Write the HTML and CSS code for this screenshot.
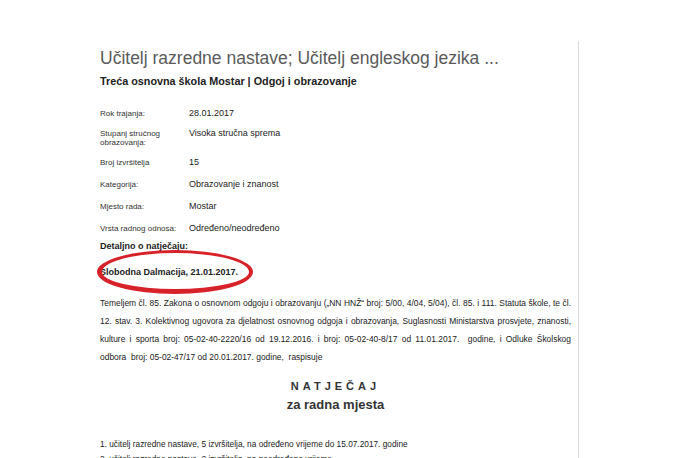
FILE: index.html
```html
<!DOCTYPE html>
<html>
<head>
<meta charset="utf-8">
<link rel="stylesheet" href="styles.css">
</head>
<body>
<div class="page">
  <div class="doc">
    <h1 class="title">Učitelj razredne nastave; Učitelj engleskog jezika ...</h1>
    <div class="sub">Treća osnovna škola Mostar | Odgoj i obrazovanje</div>
    <div class="info">
      <div class="row"><div class="lbl">Rok trajanja:</div><div class="val">28.01.2017</div></div>
      <div class="row"><div class="lbl">Stupanj stručnog obrazovanja:</div><div class="val">Visoka stručna sprema</div></div>
      <div class="row"><div class="lbl">Broj izvršitelja</div><div class="val">15</div></div>
      <div class="row"><div class="lbl">Kategorija:</div><div class="val">Obrazovanje i znanost</div></div>
      <div class="row"><div class="lbl">Mjesto rada:</div><div class="val">Mostar</div></div>
      <div class="row"><div class="lbl">Vrsta radnog odnosa:</div><div class="val">Određeno/neodređeno</div></div>
    </div>
    <div class="detail">Detaljno o natječaju:</div>
    <div class="source"><span>Slobodna Dalmacija, 21.01.2017.</span><div class="ring"></div></div>
    <p class="para">Temeljem čl. 85. Zakona o osnovnom odgoju i obrazovanju („NN HNŽ“ broj: 5/00, 4/04, 5/04), čl. 85. i 111. Statuta škole, te čl. 12. stav. 3. Kolektivnog ugovora za djelatnost osnovnog odgoja i obrazovanja, Suglasnosti Ministarstva prosvjete, znanosti, kulture i sporta broj: 05-02-40-2220/16 od 19.12.2016. i broj: 05-02-40-8/17 od 11.01.2017.&nbsp; godine, i Odluke Školskog odbora&nbsp; broj: 05-02-47/17 od 20.01.2017. godine,&nbsp; raspisuje</p>
    <div class="head">
      <div class="h-main">NATJEČAJ</div>
      <div class="h-sub">za radna mjesta</div>
    </div>
    <ol class="list">
      <li>učitelj razredne nastave, 5 izvršitelja, na određeno vrijeme do 15.07.2017. godine</li>
      <li>učitelj razredne nastave, 2 izvršitelja, na neodređeno vrijeme</li>
    </ol>
  </div>
</div>
</body>
</html>
```

FILE: styles.css
```css
html, body {
  margin: 0;
  padding: 0;
  background: #fff;
  overflow: hidden;
}
body {
  font-family: "Liberation Sans", Arial, sans-serif;
  color: #222;
  width: 678px;
  height: 458px;
  overflow: hidden;
}
.page {
  padding-top: 41px;
  padding-left: 100px;
  height: 417px;
  overflow: hidden;
}
.doc {
  width: 471px;
  border-right: 1px solid #dcdcdc;
  padding-right: 7px;
  min-height: 417px;
}
.title {
  margin: 0;
  padding-top: 6px;
  font-weight: normal;
  font-size: 17.5px;
  line-height: 22px;
  color: #5a5a5a;
}
.sub {
  margin-top: 5px;
  font-size: 10.8px;
  font-weight: bold;
  color: #222;
  line-height: 14px;
}
.info {
  margin-top: 19px;
}
.row {
  display: flex;
  margin-bottom: 10px;
}
.row:first-child {
  margin-bottom: 8px;
}
.row:nth-child(2) {
  margin-bottom: 9px;
}
.lbl {
  width: 89px;
  font-size: 8px;
  line-height: 9px;
  color: #333;
  padding-top: 2px;
}
.val {
  font-size: 9px;
  line-height: 12px;
  color: #222;
}
.detail {
  font-size: 9px;
  font-weight: bold;
  margin-top: -4px;
  line-height: 12px;
}
.source {
  position: relative;
  margin-top: 14px;
  font-size: 9px;
  font-weight: bold;
  line-height: 12px;
}
.ring {
  position: absolute;
  left: -3px;
  top: -16px;
  width: 147px;
  height: 36px;
  border-style: solid;
  border-color: #d8222a;
  border-width: 3px 4px 5px 5px;
  border-radius: 50%;
}
.para {
  margin: 16px 0 0;
  font-size: 8.45px;
  line-height: 18px;
  text-align: justify;
  color: #222;
}
.head {
  margin-top: 12px;
  text-align: center;
  font-weight: bold;
  color: #333;
}
.h-main {
  font-size: 11px;
  letter-spacing: 4px;
  line-height: 16px;
}
.h-sub {
  margin-top: 1px;
  font-size: 13px;
  line-height: 20px;
}
.list {
  margin: 22px 0 0;
  padding-left: 0;
  list-style-position: inside;
  font-size: 8.3px;
  line-height: 15px;
}
```
